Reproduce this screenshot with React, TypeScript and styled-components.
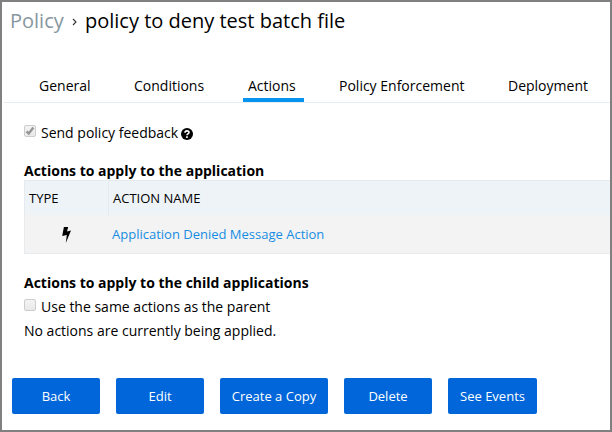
import React from "react";
import styled, { createGlobalStyle } from "styled-components";

const GlobalStyle = createGlobalStyle`
  * { box-sizing: border-box; }
  body { margin: 0; background: #fff; }
`;

const Frame = styled.main`
  width: 612px;
  height: 432px;
  border: 2px solid #808080;
  background: #fff;
  color: #000;
  font-family: "Open Sans", sans-serif;
  font-size: 14px;
  line-height: 24px;
  white-space: nowrap;
  overflow: hidden;
`;

const Breadcrumb = styled.h1`
  display: flex;
  align-items: center;
  height: 38px;
  margin: 0;
  padding-left: 8px;
  font-size: 20px;
  font-weight: 400;
`;

const Crumb = styled.span`
  width: 54px;
  color: #8796a0;
`;

const Chevron = styled.svg`
  width: 5px;
  height: 8px;
  margin: 1px 8px 0 8px;
`;

const Tabs = styled.nav`
  display: flex;
  gap: 30px;
  height: 43px;
  margin: 20px 0 0 2px;
  padding-left: 30px;
  border-bottom: 1px solid #e6edf1;
`;

const Tab = styled.a<{ $active?: boolean; $width: number }>`
  width: ${(p) => p.$width}px;
  height: 42px;
  padding: 14px 0 0 5px;
  border-bottom: 4px solid ${(p) => (p.$active ? "#0794ee" : "transparent")};
  line-height: 24px;
`;

const Content = styled.section`
  padding-left: 22px;
`;

const CheckRow = styled.label<{ $top?: number }>`
  display: flex;
  align-items: center;
  height: 24px;
  margin-top: ${(p) => p.$top ?? 0}px;
`;

const CheckBox = styled.span`
  display: grid;
  place-items: center;
  width: 12px;
  height: 12px;
  margin: -4px 5px 0 0;
  border: 1px solid #cdcdcd;
  border-radius: 2px;
  background: linear-gradient(#f3f3f3, #e9e9e9);
`;

const HelpIcon = styled.svg`
  width: 12px;
  height: 12px;
  margin: 1px 0 0 3px;
`;

const Heading = styled.h2<{ $top: number }>`
  height: 21px;
  margin: ${(p) => p.$top}px 0 0;
  font-size: 14px;
  font-weight: 700;
  line-height: 24px;
`;

const ActionTable = styled.div`
  border: 1px solid #e6eaec;
  border-right: 0;
`;

const HeaderRow = styled.div`
  display: grid;
  grid-template-columns: 83px 1fr;
  height: 34px;
  background: #eef3f7;
  font-size: 13px;
  line-height: 35px;
`;

const HeaderCell = styled.span`
  padding-left: 4px;
  & + & { border-left: 1px solid #e5ecf1; }
`;

const DataRow = styled(HeaderRow)`
  height: 38px;
  background: #f3f3f3;
  line-height: 38px;
`;

const TypeCell = styled.span`
  display: grid;
  place-items: center;
  padding-top: 2px;
`;

const ActionLink = styled.a`
  padding-left: 4px;
  color: #168de2;
`;

const Note = styled.p`
  margin: 0;
`;

const ButtonBar = styled.footer`
  display: flex;
  gap: 16px;
  margin: 35px 0 0 10px;
`;

const Button = styled.button<{ $width?: number }>`
  width: ${(p) => p.$width ?? 88}px;
  height: 36px;
  padding: 0 0 1px;
  border: 0;
  border-radius: 2px;
  background: #0066d9;
  color: #fff;
  font: 500 13px "Open Sans", sans-serif;
`;

const tabs = [
  { label: "General", width: 65 },
  { label: "Conditions", width: 84 },
  { label: "Actions", width: 61, active: true },
  { label: "Policy Enforcement", width: 139 },
  { label: "Deployment", width: 90 },
];

export default function App() {
  return (
    <Frame>
      <GlobalStyle />
      <Breadcrumb>
        <Crumb>Policy</Crumb>
        <Chevron viewBox="0 0 5 8" fill="none" stroke="#333" strokeWidth="1.1">
          <path d="M1 1l3 3-3 3" />
        </Chevron>
        <span>policy to deny test batch file</span>
      </Breadcrumb>
      <Tabs>
        {tabs.map((t) => (
          <Tab key={t.label} $width={t.width} $active={t.active}>{t.label}</Tab>
        ))}
      </Tabs>
      <Content>
        <CheckRow $top={18}>
          <CheckBox>
            <svg width="10" height="10" viewBox="0 0 10 10" fill="none" stroke="#969696" strokeWidth="2.4">
              <path d="M1.5 5.3l2.3 2.2L8.4 1.6" />
            </svg>
          </CheckBox>
          Send policy feedback
          <HelpIcon viewBox="0 0 12 12">
            <circle cx="6" cy="6" r="6" />
            <path d="M4 4.7C4 2.3 8 2.3 8 4.5c0 1.4-2 1.4-2 2.7" fill="none" stroke="#fff" strokeWidth="1.6" />
            <path d="M5.1 8.3h1.7v1.6H5.1z" fill="#fff" />
          </HelpIcon>
        </CheckRow>
        <Heading $top={14}>Actions to apply to the application</Heading>
        <ActionTable>
          <HeaderRow>
            <HeaderCell>TYPE</HeaderCell>
            <HeaderCell>ACTION NAME</HeaderCell>
          </HeaderRow>
          <DataRow>
            <TypeCell>
              <svg width="9" height="16" viewBox="0 0 9 16">
                <path d="M1.9 0h4.3L5 4.4 9 3.5 3.8 16l1-8.1L.2 9z" />
              </svg>
            </TypeCell>
            <ActionLink>Application Denied Message Action</ActionLink>
          </DataRow>
        </ActionTable>
        <Heading $top={17}>Actions to apply to the child applications</Heading>
        <CheckRow $top={3}>
          <CheckBox />
          Use the same actions as the parent
        </CheckRow>
        <Note>No actions are currently being applied.</Note>
      </Content>
      <ButtonBar>
        <Button>Back</Button>
        <Button>Edit</Button>
        <Button $width={108}>Create a Copy</Button>
        <Button>Delete</Button>
        <Button $width={89}>See Events</Button>
      </ButtonBar>
    </Frame>
  );
}
